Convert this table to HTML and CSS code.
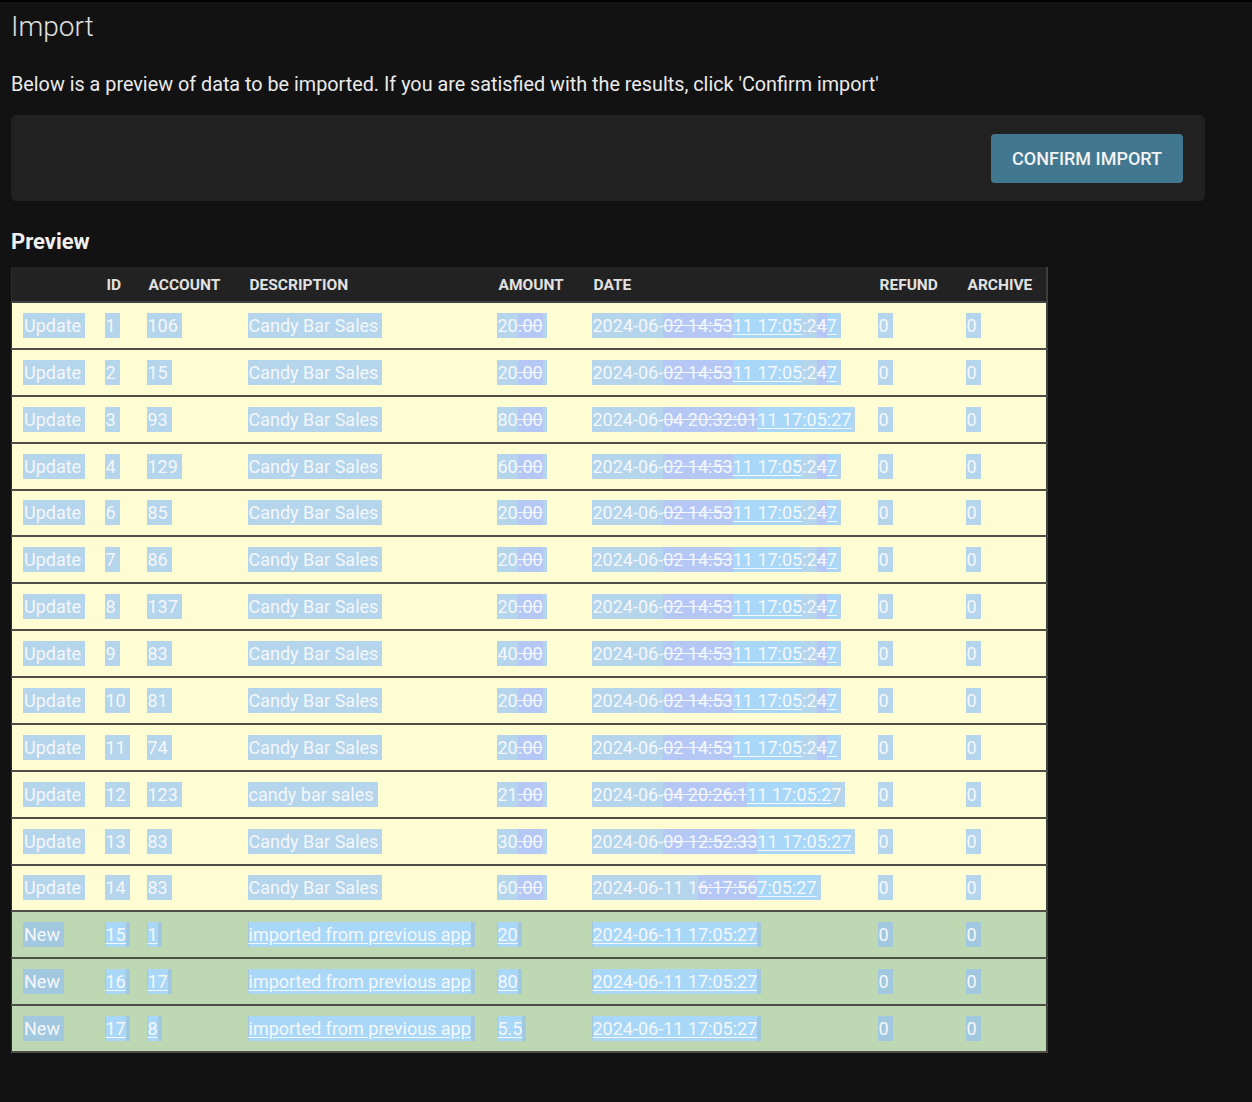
FILE: index.html
```html
<!DOCTYPE html>
<html lang="en">
<head>
<meta charset="utf-8">
<title>Import</title>
<link rel="stylesheet" href="styles.css">
</head>
<body>
<div class="page">
  <h1 class="title">Import</h1>
  <p class="lead">Below is a preview of data to be imported. If you are satisfied with the results, click 'Confirm import'</p>
  <div class="card">
    <button class="btn" type="button">Confirm import</button>
  </div>
  <h2 class="section">Preview</h2>
  <table class="preview">
    <colgroup>
      <col class="c-status"><col class="c-id"><col class="c-acct"><col class="c-desc"><col class="c-amt"><col class="c-date"><col class="c-ref"><col class="c-arc">
    </colgroup>
    <thead>
      <tr><th></th><th>ID</th><th>Account</th><th>Description</th><th>Amount</th><th>Date</th><th>Refund</th><th>Archive</th></tr>
    </thead>
    <tbody>
      <tr class="upd"><td><span class="s">Update</span></td><td><span class="s">1</span></td><td><span class="s">106</span></td><td><span class="s">Candy Bar Sales</span></td><td><span class="s">20<span class="d">.00</span></span></td><td><span class="s">2024-06-<span class="d">02 14:53</span><span class="i">11 17:05</span>:2<span class="d">4</span><span class="i">7</span></span></td><td><span class="s">0</span></td><td><span class="s">0</span></td></tr>
      <tr class="upd"><td><span class="s">Update</span></td><td><span class="s">2</span></td><td><span class="s">15</span></td><td><span class="s">Candy Bar Sales</span></td><td><span class="s">20<span class="d">.00</span></span></td><td><span class="s">2024-06-<span class="d">02 14:53</span><span class="i">11 17:05</span>:2<span class="d">4</span><span class="i">7</span></span></td><td><span class="s">0</span></td><td><span class="s">0</span></td></tr>
      <tr class="upd"><td><span class="s">Update</span></td><td><span class="s">3</span></td><td><span class="s">93</span></td><td><span class="s">Candy Bar Sales</span></td><td><span class="s">80<span class="d">.00</span></span></td><td><span class="s">2024-06-<span class="d">04 20:32:01</span><span class="i">11 17:05:27</span></span></td><td><span class="s">0</span></td><td><span class="s">0</span></td></tr>
      <tr class="upd"><td><span class="s">Update</span></td><td><span class="s">4</span></td><td><span class="s">129</span></td><td><span class="s">Candy Bar Sales</span></td><td><span class="s">60<span class="d">.00</span></span></td><td><span class="s">2024-06-<span class="d">02 14:53</span><span class="i">11 17:05</span>:2<span class="d">4</span><span class="i">7</span></span></td><td><span class="s">0</span></td><td><span class="s">0</span></td></tr>
      <tr class="upd"><td><span class="s">Update</span></td><td><span class="s">6</span></td><td><span class="s">85</span></td><td><span class="s">Candy Bar Sales</span></td><td><span class="s">20<span class="d">.00</span></span></td><td><span class="s">2024-06-<span class="d">02 14:53</span><span class="i">11 17:05</span>:2<span class="d">4</span><span class="i">7</span></span></td><td><span class="s">0</span></td><td><span class="s">0</span></td></tr>
      <tr class="upd"><td><span class="s">Update</span></td><td><span class="s">7</span></td><td><span class="s">86</span></td><td><span class="s">Candy Bar Sales</span></td><td><span class="s">20<span class="d">.00</span></span></td><td><span class="s">2024-06-<span class="d">02 14:53</span><span class="i">11 17:05</span>:2<span class="d">4</span><span class="i">7</span></span></td><td><span class="s">0</span></td><td><span class="s">0</span></td></tr>
      <tr class="upd"><td><span class="s">Update</span></td><td><span class="s">8</span></td><td><span class="s">137</span></td><td><span class="s">Candy Bar Sales</span></td><td><span class="s">20<span class="d">.00</span></span></td><td><span class="s">2024-06-<span class="d">02 14:53</span><span class="i">11 17:05</span>:2<span class="d">4</span><span class="i">7</span></span></td><td><span class="s">0</span></td><td><span class="s">0</span></td></tr>
      <tr class="upd"><td><span class="s">Update</span></td><td><span class="s">9</span></td><td><span class="s">83</span></td><td><span class="s">Candy Bar Sales</span></td><td><span class="s">40<span class="d">.00</span></span></td><td><span class="s">2024-06-<span class="d">02 14:53</span><span class="i">11 17:05</span>:2<span class="d">4</span><span class="i">7</span></span></td><td><span class="s">0</span></td><td><span class="s">0</span></td></tr>
      <tr class="upd"><td><span class="s">Update</span></td><td><span class="s">10</span></td><td><span class="s">81</span></td><td><span class="s">Candy Bar Sales</span></td><td><span class="s">20<span class="d">.00</span></span></td><td><span class="s">2024-06-<span class="d">02 14:53</span><span class="i">11 17:05</span>:2<span class="d">4</span><span class="i">7</span></span></td><td><span class="s">0</span></td><td><span class="s">0</span></td></tr>
      <tr class="upd"><td><span class="s">Update</span></td><td><span class="s">11</span></td><td><span class="s">74</span></td><td><span class="s">Candy Bar Sales</span></td><td><span class="s">20<span class="d">.00</span></span></td><td><span class="s">2024-06-<span class="d">02 14:53</span><span class="i">11 17:05</span>:2<span class="d">4</span><span class="i">7</span></span></td><td><span class="s">0</span></td><td><span class="s">0</span></td></tr>
      <tr class="upd"><td><span class="s">Update</span></td><td><span class="s">12</span></td><td><span class="s">123</span></td><td><span class="s">candy bar sales</span></td><td><span class="s">21<span class="d">.00</span></span></td><td><span class="s">2024-06-<span class="d">04 20:26:1</span><span class="i">11 17:05:2</span>7</span></td><td><span class="s">0</span></td><td><span class="s">0</span></td></tr>
      <tr class="upd"><td><span class="s">Update</span></td><td><span class="s">13</span></td><td><span class="s">83</span></td><td><span class="s">Candy Bar Sales</span></td><td><span class="s">30<span class="d">.00</span></span></td><td><span class="s">2024-06-<span class="d">09 12:52:33</span><span class="i">11 17:05:27</span></span></td><td><span class="s">0</span></td><td><span class="s">0</span></td></tr>
      <tr class="upd"><td><span class="s">Update</span></td><td><span class="s">14</span></td><td><span class="s">83</span></td><td><span class="s">Candy Bar Sales</span></td><td><span class="s">60<span class="d">.00</span></span></td><td><span class="s">2024-06-11 1<span class="d">6:17:56</span><span class="i">7:05:27</span></span></td><td><span class="s">0</span></td><td><span class="s">0</span></td></tr>
      <tr class="new"><td><span class="s">New</span></td><td><span class="s"><span class="i">15</span></span></td><td><span class="s"><span class="i">1</span></span></td><td><span class="s"><span class="i">imported from previous app</span></span></td><td><span class="s"><span class="i">20</span></span></td><td><span class="s"><span class="i">2024-06-11 17:05:27</span></span></td><td><span class="s">0</span></td><td><span class="s">0</span></td></tr>
      <tr class="new"><td><span class="s">New</span></td><td><span class="s"><span class="i">16</span></span></td><td><span class="s"><span class="i">17</span></span></td><td><span class="s"><span class="i">imported from previous app</span></span></td><td><span class="s"><span class="i">80</span></span></td><td><span class="s"><span class="i">2024-06-11 17:05:27</span></span></td><td><span class="s">0</span></td><td><span class="s">0</span></td></tr>
      <tr class="new"><td><span class="s">New</span></td><td><span class="s"><span class="i">17</span></span></td><td><span class="s"><span class="i">8</span></span></td><td><span class="s"><span class="i">imported from previous app</span></span></td><td><span class="s"><span class="i">5.5</span></span></td><td><span class="s"><span class="i">2024-06-11 17:05:27</span></span></td><td><span class="s">0</span></td><td><span class="s">0</span></td></tr>
    </tbody>
  </table>
</div>
</body>
</html>
```
FILE: styles.css
```css
html, body {
  margin: 0;
  padding: 0;
  background: #121212;
}

body {
  font-family: Roboto, "Liberation Sans", sans-serif;
  color: #e6e6e6;
}

.page {
  border-top: 2px solid #000;
  padding: 0 47px 50px 11px;
}

.title {
  margin: 8px 0 0 0;
  font-size: 28px;
  line-height: 34px;
  font-weight: 300;
  color: #e0e0e0;
}

.lead {
  margin: 29px 0 0 0;
  font-size: 19.8px;
  line-height: 24px;
  font-weight: 400;
  color: #eaeaea;
}

.card {
  margin-top: 18px;
  background: #212121;
  border-radius: 5px;
  padding: 19px 22px 18px;
  display: flex;
  justify-content: flex-end;
}

.btn {
  height: 49px;
  padding: 0 21px;
  border: 0;
  border-radius: 4px;
  background: #42788f;
  color: #f2f2f2;
  font-family: Roboto, "Liberation Sans", sans-serif;
  font-size: 18px;
  font-weight: 500;
  text-transform: uppercase;
}

.section {
  margin: 27px 0 0 0;
  font-size: 22px;
  line-height: 28px;
  font-weight: 700;
  color: #f0f0f0;
}

.preview {
  margin-top: 11px;
  width: 1035px;
  border-collapse: collapse;
  table-layout: fixed;
  border-left: 1px solid #2e2e2e;
  border-right: 2px solid #3e3e3e;
}

.c-status { width: 83px; }
.c-id { width: 42px; }
.c-acct { width: 101px; }
.c-desc { width: 249px; }
.c-amt { width: 95px; }
.c-date { width: 286px; }
.c-ref { width: 88px; }
.c-arc { width: 91px; }

.preview th {
  background: #222;
  height: 32px;
  padding: 2px 0 0 12px;
  text-align: left;
  font-size: 15.5px;
  font-weight: 700;
  text-transform: uppercase;
  color: #e2e2e2;
  border-bottom: 2px solid #444;
  white-space: nowrap;
}

.preview td {
  height: 44.875px;
  padding: 0 0 0 10px;
  font-size: 18px;
  white-space: nowrap;
  border-bottom: 2px solid #4e4e46;
}

.preview th:first-child,
.preview td:first-child {
  padding-left: 11px;
}

.upd td { background: #fdfcd3; }
.new td { background: #bed8b4; }

.s {
  color: #f4f7fa;
  padding: 2px 4px 2px 1px;
}

.upd .s { background: #b4d5ec; }
.new .s { background: #a2c8df; }

.d {
  background: #b4c7f5;
  text-decoration: line-through;
  padding: 2px 0;
}

.i {
  background: #a9d7f7;
  text-decoration: underline;
  text-underline-offset: 2px;
  padding: 2px 0;
}
```
